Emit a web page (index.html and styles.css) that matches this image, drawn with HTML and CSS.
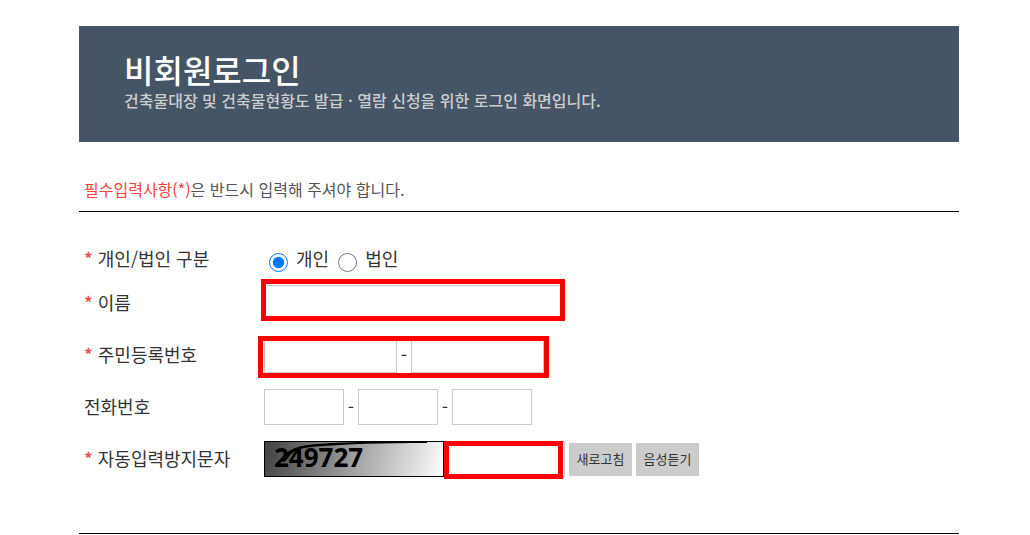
FILE: index.html
```html
<!DOCTYPE html>
<html lang="ko">
<head>
<meta charset="utf-8">
<meta name="viewport" content="width=device-width, initial-scale=1">
<title>비회원로그인</title>
<link rel="stylesheet" href="styles.css">
</head>
<body>
<main class="page">
  <header class="banner">
    <h1 class="banner-title">비회원로그인</h1>
    <p class="banner-text">건축물대장 및 건축물현황도 발급 · 열람 신청을 위한 로그인 화면입니다.</p>
  </header>
  <p class="notice"><span class="required">필수입력사항(*)</span>은 반드시 입력해 주셔야 합니다.</p>
  <form class="form">
    <div class="row row-choice" role="radiogroup" aria-labelledby="kind-label">
      <span class="label" id="kind-label"><span class="required star">*</span> 개인/법인 구분</span>
      <div class="choices">
        <input class="radio" type="radio" name="kind" id="person" checked><label class="choice-label" for="person">개인</label>
        <input class="radio" type="radio" name="kind" id="company"><label class="choice-label" for="company">법인</label>
      </div>
    </div>
    <div class="row">
      <label class="label" for="name"><span class="required star">*</span> 이름</label>
      <div class="fields marked mark-name"><input class="box box-name" type="text" id="name"></div>
    </div>
    <div class="row">
      <label class="label" for="reg1"><span class="required star">*</span> 주민등록번호</label>
      <div class="fields marked mark-reg">
        <input class="box box-reg" type="text" id="reg1"><span class="dash">-</span><input class="box box-reg" type="password" aria-label="주민등록번호 뒷자리">
      </div>
    </div>
    <div class="row">
      <label class="label" for="tel1">전화번호</label>
      <div class="fields">
        <input class="box box-tel" type="tel" id="tel1"><span class="dash">-</span><input class="box box-tel" type="tel" aria-label="전화번호 가운데자리"><span class="dash">-</span><input class="box box-tel" type="tel" aria-label="전화번호 끝자리">
      </div>
    </div>
    <div class="row">
      <label class="label" for="code"><span class="required star">*</span> 자동입력방지문자</label>
      <div class="fields">
        <svg class="captcha" viewBox="0 0 180 36">
          <defs>
            <linearGradient id="shade" gradientUnits="userSpaceOnUse" x1="0" y1="0" x2="174" y2="48">
              <stop offset="0" stop-color="#404040"/>
              <stop offset="1" stop-color="#fcfcfc"/>
            </linearGradient>
          </defs>
          <rect x=".5" y=".5" width="179" height="35" fill="url(#shade)" stroke="#000"/>
          <text class="captcha-text" x="10" y="26">249727</text>
          <path d="M18 19C21 10 31 5 48 3.500C85 0 122 .8 163 .8V2C120 2 82 3 52 5.500C34 7 28 11 24 17C22 21 17 22 18 19Z"/>
        </svg>
        <div class="marked mark-code"><input class="box box-code" type="text" id="code"></div>
        <div class="buttons">
          <button class="button" type="button">새로고침</button>
          <button class="button" type="button">음성듣기</button>
        </div>
      </div>
    </div>
  </form>
</main>
</body>
</html>
```
FILE: styles.css
```css
* { box-sizing: border-box; }
body {
  margin: 0;
  background: #fff;
  color: #333;
  font-family: "Noto Sans CJK KR", sans-serif;
  font-size: 18px;
  line-height: 26px;
}
.page { padding: 26px 71px 0 79px; }
.banner {
  padding: 25px 45px 30px;
  background: #455565;
}
.banner-title {
  margin: 0;
  color: #fff;
  font-size: 32px;
  font-weight: 500;
  line-height: 37px;
}
.banner-text {
  margin: 0;
  color: #ccc;
  font-size: 16px;
  font-weight: 500;
  line-height: 24px;
}
.notice {
  margin: 0;
  padding: 35px 5px 10px;
  border-bottom: 1px solid #000;
  color: #555;
  font-size: 16px;
  line-height: 24px;
}
.required { color: #fa4040; }
.star { font-weight: 500; }
.form {
  display: flex;
  flex-direction: column;
  gap: 16px;
  padding: 29px 0 56px 5px;
  border-bottom: 1px solid #000;
}
.row {
  display: flex;
  align-items: center;
  min-height: 36px;
}
.row-choice { margin-bottom: -8px; }
.label {
  flex: 0 0 180px;
  padding-bottom: 2px;
}
.choices, .fields { display: flex; align-items: center; }
.radio {
  width: 19px;
  height: 19px;
  margin: 7px 8px 0 5px;
}
.choice-label {
  margin-right: 4px;
  padding-bottom: 2px;
}
.marked { position: relative; }
.marked::after {
  content: "";
  position: absolute;
  border: 5px solid #f00;
  pointer-events: none;
}
.mark-name::after { inset: -6px -1px 0 -3px; }
.mark-reg::after { inset: -1px -5px -5px -6px; }
.mark-code::after { inset: 0 2px -2px 0; }
.box {
  display: block;
  height: 36px;
  padding: 0 8px;
  border: 1px solid #ccc;
  background: #fff;
  font: inherit;
}
.box-name { width: 300px; }
.box-reg { width: 133px; }
.box-tel { width: 80px; }
.box-code { width: 121px; }
.dash {
  width: 14px;
  padding-bottom: 2px;
  text-align: center;
}
.captcha {
  display: block;
  width: 180px;
  height: 36px;
  overflow: visible;
}
.captcha-text {
  font-family: "Open Sans", sans-serif;
  font-size: 26px;
  font-weight: 700;
}
.buttons {
  display: flex;
  gap: 4px;
  margin-left: 4px;
}
.button {
  min-width: 63px;
  height: 33px;
  padding: 0 7px 2px;
  border: 0;
  background: #ccc;
  color: #333;
  font-family: inherit;
  font-size: 13px;
}
```
